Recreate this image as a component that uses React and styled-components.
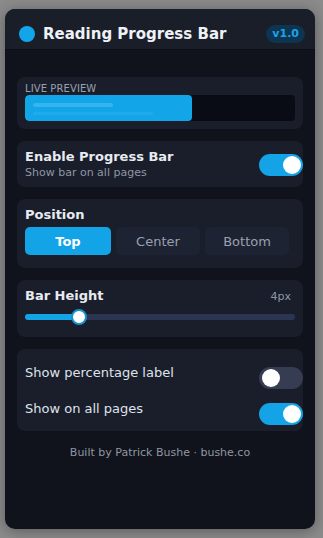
import styled, { createGlobalStyle } from "styled-components";

const GlobalStyle = createGlobalStyle`
  html, body {
    margin: 0;
    padding: 0;
    background: #8b8b8b;
  }
  body {
    font-family: "DejaVu Sans", Verdana, sans-serif;
  }
  * { box-sizing: border-box; }
`;

const positions = ["Top", "Center", "Bottom"];

export default function App() {
  return (
    <>
      <GlobalStyle />
      <Page>
        <Card>
          <Header>
            <Dot />
            <Title>Reading Progress Bar</Title>
            <Badge>v1.0</Badge>
          </Header>

          <Body>
            <Section $pad="6px 8px 8px">
              <SmallLabel>LIVE PREVIEW</SmallLabel>
              <PreviewTrack>
                <PreviewFill style={{ width: "62%" }}>
                  <Shine $w={80} $top={8} $h={4} $o={0.35} />
                  <Shine $w={120} $top={17} $h={3} $o={0.15} />
                </PreviewFill>
              </PreviewTrack>
            </Section>

            <Section $pad="8px 8px 6px">
              <Row>
                <div>
                  <Heading>Enable Progress Bar</Heading>
                  <Sub>Show bar on all pages</Sub>
                </div>
                <Toggle $on />
              </Row>
            </Section>

            <Section $pad="8px 8px 13px">
              <Heading>Position</Heading>
              <Segments>
                {positions.map((p) => (
                  <Segment key={p} $active={p === "Top"}>
                    {p}
                  </Segment>
                ))}
              </Segments>
            </Section>

            <Section $pad="8px 8px 13px">
              <Row>
                <Heading>Bar Height</Heading>
                <Value>4px</Value>
              </Row>
              <Slider>
                <SliderTrack>
                  <SliderFill style={{ width: "20%" }} />
                </SliderTrack>
                <SliderKnob style={{ left: "20%" }} />
              </Slider>
            </Section>

            <Section $pad="16px 8px 5px">
              <OptionList>
                <OptionRow>
                  <OptionLabel>Show percentage label</OptionLabel>
                  <Toggle />
                </OptionRow>
                <OptionRow>
                  <OptionLabel>Show on all pages</OptionLabel>
                  <Toggle $on />
                </OptionRow>
              </OptionList>
            </Section>

            <Footer>Built by Patrick Bushe · bushe.co</Footer>
          </Body>
        </Card>
      </Page>
    </>
  );
}

function Toggle({ $on }) {
  return (
    <ToggleTrack $on={$on}>
      <ToggleKnob $on={$on} />
    </ToggleTrack>
  );
}

const Page = styled.div`
  padding: 9px 8px 9px 5px;
`;

const Card = styled.div`
  width: 310px;
  height: 520px;
  background: #10131b;
  border-radius: 10px;
  overflow: hidden;
  box-shadow: 0 2px 14px rgba(0, 0, 0, 0.35);
`;

const Header = styled.div`
  display: flex;
  align-items: center;
  height: 41px;
  padding: 10px 10px 0 14px;
  background: #1a1e29;
  border-bottom: 1px solid #0c0f15;
`;

const Dot = styled.span`
  width: 16px;
  height: 16px;
  border-radius: 50%;
  background: #12a5ea;
  flex-shrink: 0;
`;

const Title = styled.h1`
  margin: 0 0 0 8px;
  flex: 1;
  font-size: 15px;
  font-weight: 700;
  color: #eef1f6;
`;

const Badge = styled.span`
  padding: 2px 6px;
  border-radius: 10px;
  background: #0d3450;
  color: #1ca3e6;
  font-size: 11px;
  font-weight: 700;
  line-height: 14px;
`;

const Body = styled.div`
  display: flex;
  flex-direction: column;
  gap: 12px;
  padding: 27px 12px 0;
`;

const Section = styled.div`
  background: #1a1e2b;
  border-radius: 8px;
  padding: ${({ $pad }) => $pad};
`;

const SmallLabel = styled.div`
  font-size: 10px;
  line-height: 12px;
  color: #9ba1ae;
  letter-spacing: 0.1px;
`;

const PreviewTrack = styled.div`
  height: 26px;
  border-radius: 4px;
  background: #090c14;
  overflow: hidden;
`;

const PreviewFill = styled.div`
  position: relative;
  height: 100%;
  background: #12a5e8;
  border-radius: 4px;
`;

const Shine = styled.span`
  position: absolute;
  left: 8px;
  top: ${({ $top }) => $top}px;
  width: ${({ $w }) => $w}px;
  height: ${({ $h }) => $h}px;
  border-radius: 2px;
  background: rgba(120, 210, 255, ${({ $o }) => $o});
`;

const Row = styled.div`
  display: flex;
  align-items: center;
  justify-content: space-between;
`;

const Heading = styled.div`
  font-size: 13px;
  font-weight: 700;
  line-height: 16px;
  color: #e8ebf1;
`;

const Sub = styled.div`
  font-size: 11px;
  line-height: 16px;
  color: #8f96a4;
`;

const Value = styled.span`
  font-size: 11px;
  color: #8f96a4;
  margin-right: 4px;
`;

const ToggleTrack = styled.div`
  position: relative;
  width: 44px;
  height: 22px;
  margin-right: -8px;
  border-radius: 11px;
  background: ${({ $on }) => ($on ? "#14a3e6" : "#363c52")};
  flex-shrink: 0;
`;

const ToggleKnob = styled.span`
  position: absolute;
  top: 2px;
  left: ${({ $on }) => ($on ? "24px" : "3px")};
  width: 18px;
  height: 18px;
  border-radius: 50%;
  background: #ffffff;
`;

const Segments = styled.div`
  display: grid;
  grid-template-columns: 86px 1fr 1fr;
  gap: 5px;
  margin: 4px 6px 0 0;
`;

const Segment = styled.div`
  height: 28px;
  display: flex;
  align-items: center;
  justify-content: center;
  border-radius: 5px;
  font-size: 13px;
  font-weight: ${({ $active }) => ($active ? 700 : 400)};
  color: ${({ $active }) => ($active ? "#ffffff" : "#9aa0ae")};
  background: ${({ $active }) => ($active ? "#13a4e7" : "#1e2333")};
`;

const Slider = styled.div`
  position: relative;
  height: 14px;
  margin-top: 6px;
  display: flex;
  align-items: center;
`;

const SliderTrack = styled.div`
  width: 100%;
  height: 6px;
  border-radius: 3px;
  background: #2b3450;
  overflow: hidden;
`;

const SliderFill = styled.div`
  height: 100%;
  background: #13a4e7;
`;

const SliderKnob = styled.span`
  position: absolute;
  top: 0;
  width: 16px;
  height: 16px;
  margin: -1px 0 0 -8px;
  border-radius: 50%;
  background: #ffffff;
  border: 2px solid #1590d0;
`;

const OptionList = styled.div`
  display: flex;
  flex-direction: column;
  gap: 11px;
`;

const OptionRow = styled.div`
  display: flex;
  align-items: flex-start;
  justify-content: space-between;
  height: 25px;

  & > div:last-child {
    margin-top: 2px;
  }
`;

const OptionLabel = styled.span`
  font-size: 13px;
  line-height: 16px;
  color: #dfe3ea;
`;

const Footer = styled.div`
  margin-top: 3px;
  text-align: center;
  font-size: 11px;
  line-height: 14px;
  color: #8f96a4;
`;
